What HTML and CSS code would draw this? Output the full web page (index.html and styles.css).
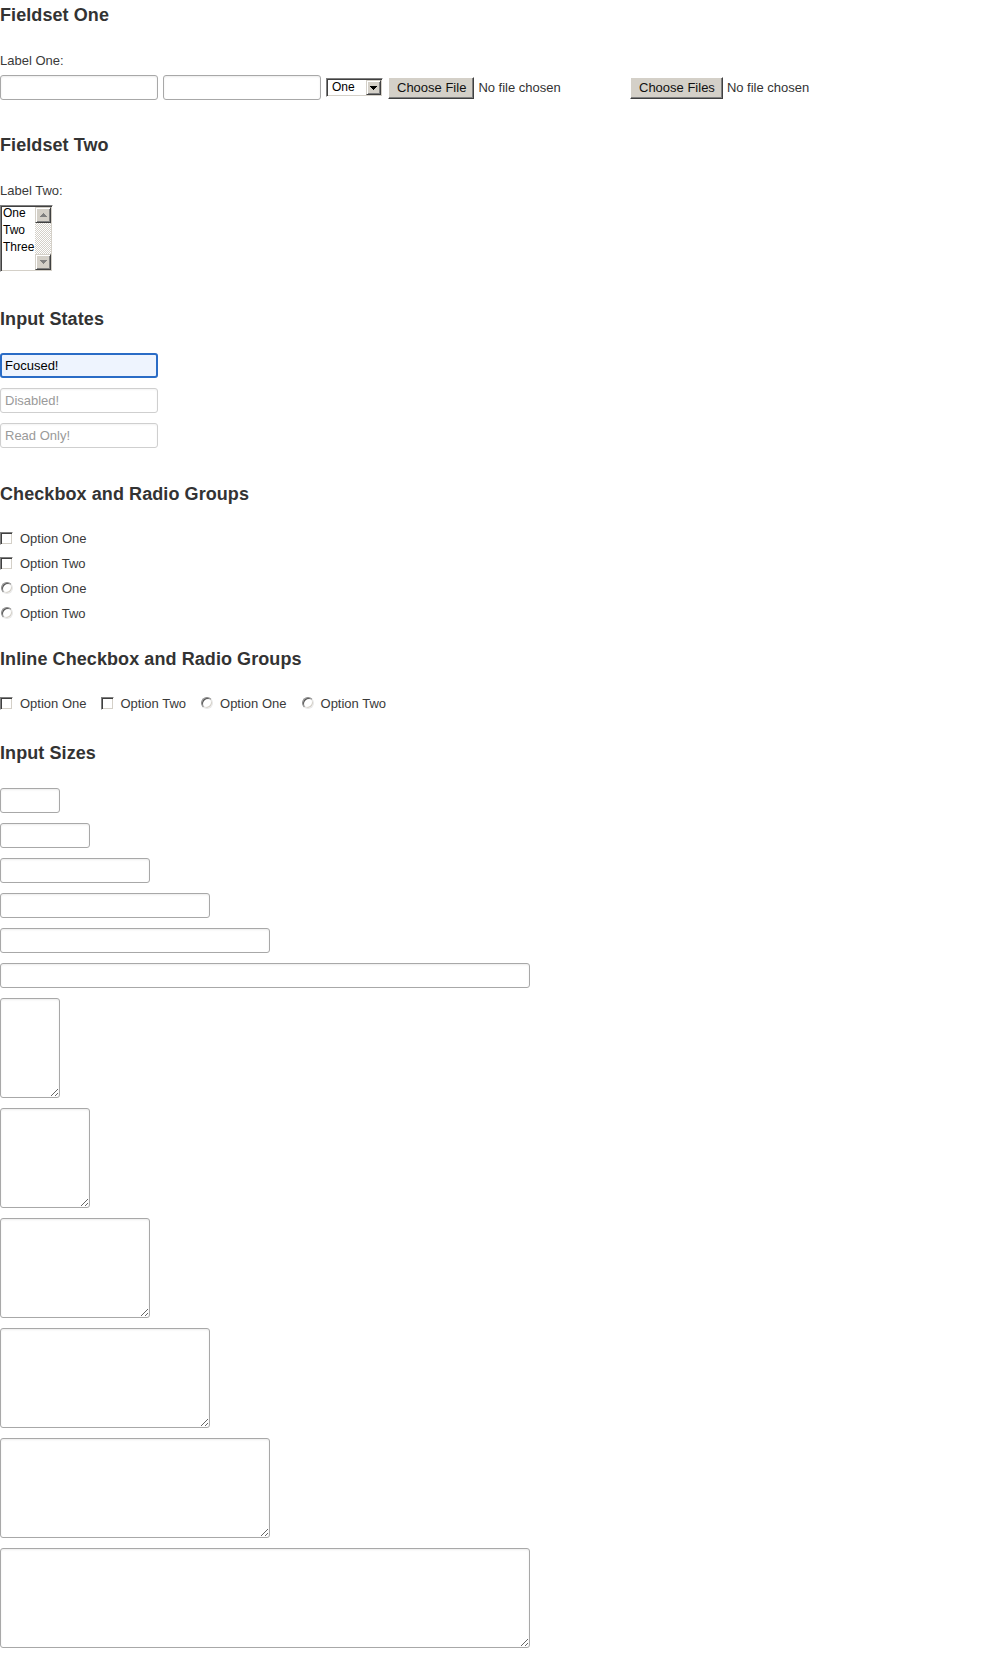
FILE: index.html
```html
<!DOCTYPE html>
<html lang="en">
<head>
<meta charset="utf-8">
<title>Form Elements</title>
<link rel="stylesheet" href="styles.css">
</head>
<body>
<form class="page">
  <section class="group">
    <h2 class="group-title">Fieldset One</h2>
    <label class="field-label" for="label-one">Label One:</label>
    <div class="field-row">
      <input id="label-one" class="text-input w-row" type="text">
      <input class="text-input w-row" type="text">
      <span class="select">
        <span class="select-value">One</span>
        <span class="select-arrow"><svg width="7" height="4" viewBox="0 0 7 4" shape-rendering="crispEdges"><rect x="0" y="0" width="7" height="1" fill="#000"/><rect x="1" y="1" width="5" height="1" fill="#000"/><rect x="2" y="2" width="3" height="1" fill="#000"/><rect x="3" y="3" width="1" height="1" fill="#000"/></svg></span>
      </span>
      <span class="file-input file-input--single"><span class="win-button">Choose File</span><span class="file-status">No file chosen</span></span>
      <span class="file-input"><span class="win-button">Choose Files</span><span class="file-status">No file chosen</span></span>
    </div>
  </section>

  <section class="group group--two">
    <h2 class="group-title">Fieldset Two</h2>
    <label class="field-label">Label Two:</label>
    <div class="listbox">
      <ul class="listbox-items">
        <li>One</li>
        <li>Two</li>
        <li>Three</li>
      </ul>
      <div class="scrollbar">
        <span class="scroll-btn"><svg width="7" height="4" viewBox="0 0 7 4" shape-rendering="crispEdges"><rect x="3" y="0" width="1" height="1" fill="#808080"/><rect x="2" y="1" width="3" height="1" fill="#808080"/><rect x="1" y="2" width="5" height="1" fill="#808080"/><rect x="0" y="3" width="7" height="1" fill="#808080"/></svg></span>
        <span class="scroll-track"></span>
        <span class="scroll-btn"><svg width="7" height="4" viewBox="0 0 7 4" shape-rendering="crispEdges"><rect x="0" y="0" width="7" height="1" fill="#808080"/><rect x="1" y="1" width="5" height="1" fill="#808080"/><rect x="2" y="2" width="3" height="1" fill="#808080"/><rect x="3" y="3" width="1" height="1" fill="#808080"/></svg></span>
      </div>
    </div>
  </section>

  <section class="group group--states">
    <h2 class="group-title">Input States</h2>
    <div class="stack">
      <input class="text-input w-row is-focused" type="text" value="Focused!">
      <input class="text-input w-row is-muted" type="text" placeholder="Disabled!" disabled>
      <input class="text-input w-row is-muted" type="text" placeholder="Read Only!" readonly>
    </div>
  </section>

  <section class="group group--checks">
    <h2 class="group-title">Checkbox and Radio Groups</h2>
    <div class="check-list">
      <label class="check"><input class="win-check" type="checkbox"><span class="check-text">Option One</span></label>
      <label class="check"><input class="win-check" type="checkbox"><span class="check-text">Option Two</span></label>
      <label class="check"><input class="win-radio" type="radio" name="r1"><span class="check-text">Option One</span></label>
      <label class="check"><input class="win-radio" type="radio" name="r1"><span class="check-text">Option Two</span></label>
    </div>
  </section>

  <section class="group group--inline">
    <h2 class="group-title">Inline Checkbox and Radio Groups</h2>
    <div class="check-inline">
      <label class="check"><input class="win-check" type="checkbox"><span class="check-text">Option One</span></label>
      <label class="check"><input class="win-check" type="checkbox"><span class="check-text">Option Two</span></label>
      <label class="check"><input class="win-radio" type="radio" name="r2"><span class="check-text">Option One</span></label>
      <label class="check"><input class="win-radio" type="radio" name="r2"><span class="check-text">Option Two</span></label>
    </div>
  </section>

  <section class="group group--sizes">
    <h2 class="group-title">Input Sizes</h2>
    <div class="stack stack--sizes">
      <input class="text-input size-mini" type="text">
      <input class="text-input size-small" type="text">
      <input class="text-input size-medium" type="text">
      <input class="text-input size-large" type="text">
      <input class="text-input size-xlarge" type="text">
      <input class="text-input size-xxlarge" type="text">
      <textarea class="text-area size-mini"></textarea>
      <textarea class="text-area size-small"></textarea>
      <textarea class="text-area size-medium"></textarea>
      <textarea class="text-area size-large"></textarea>
      <textarea class="text-area size-xlarge"></textarea>
      <textarea class="text-area size-xxlarge"></textarea>
    </div>
  </section>
</form>
</body>
</html>
```

FILE: styles.css
```css
* {
  box-sizing: border-box;
}

html,
body {
  margin: 0;
  padding: 0;
  background: #fff;
}

body {
  font-family: "Liberation Sans", Arial, sans-serif;
  font-size: 13px;
  color: #333;
}

.page {
  display: block;
  padding-top: 5px;
}

.group-title {
  margin: 0;
  font-size: 18px;
  line-height: 20px;
  font-weight: bold;
  letter-spacing: 0.08px;
  color: #333;
}

.group--two { margin-top: 35px; }
.group--states { margin-top: 37px; }
.group--checks { margin-top: 36px; }
.group--inline { margin-top: 26px; }
.group--sizes { margin-top: 30px; }

.field-label {
  display: block;
  margin-top: 28px;
  line-height: 16px;
  font-size: 13px;
  color: #3a3a3a;
}

.field-row {
  display: flex;
  align-items: center;
  gap: 5px;
  margin-top: 6px;
  height: 25px;
}

/* text inputs */
.text-input {
  display: block;
  height: 25px;
  margin: 0;
  padding: 0 4px;
  border: 1px solid #a8a8a8;
  border-radius: 3px;
  background: #fff;
  box-shadow: inset 0 1px 2px rgba(0, 0, 0, 0.08);
  font-family: "Liberation Sans", Arial, sans-serif;
  font-size: 13px;
  color: #000;
  outline: none;
}

.w-row { width: 158px; }

.is-focused {
  border: 2px solid #2a6cc6;
  background: #eef4fe;
  padding: 0 3px;
  box-shadow: none;
}

.is-muted {
  border-color: #cfcfcf;
  background: #fff;
  box-shadow: inset 0 1px 2px rgba(0, 0, 0, 0.05);
}

.text-input::placeholder {
  color: #9a9a9a;
  opacity: 1;
}

/* classic select */
.select {
  display: flex;
  align-items: stretch;
  width: 57px;
  height: 19px;
  padding: 1px;
  border: 1px solid;
  border-color: #808080 #fff #fff #808080;
  box-shadow: inset 1px 1px 0 #404040, inset -1px -1px 0 #d4d0c8;
  background: #fff;
  font-size: 12px;
  color: #000;
}

.select-value {
  flex: 1;
  padding-left: 4px;
  line-height: 15px;
}

.select-arrow {
  width: 15px;
  display: flex;
  align-items: center;
  justify-content: center;
  background: #d4d0c8;
  border: 1px solid;
  border-color: #d4d0c8 #404040 #404040 #d4d0c8;
  box-shadow: inset 1px 1px 0 #fff, inset -1px -1px 0 #808080;
}

/* file inputs */
.file-input {
  display: flex;
  align-items: center;
  gap: 4px;
  color: #333;
}

.file-input--single {
  width: 237px;
}

.win-button {
  display: inline-flex;
  align-items: center;
  height: 22px;
  padding: 0 7px 0 8px;
  background: #d4d0c8;
  border: 1px solid;
  border-color: #fff #404040 #404040 #fff;
  box-shadow: inset -1px -1px 0 #808080;
  color: #111;
  font-size: 13px;
  white-space: nowrap;
}

.file-status {
  white-space: nowrap;
}

/* listbox */
.listbox {
  display: flex;
  width: 53px;
  height: 67px;
  margin-top: 6px;
  padding: 1px;
  border: 1px solid;
  border-color: #808080 #fff #fff #808080;
  box-shadow: inset 1px 1px 0 #404040, inset -1px -1px 0 #d4d0c8;
  background: #fff;
}

.listbox-items {
  flex: 1;
  margin: 0;
  padding: 0 0 0 1px;
  list-style: none;
  font-size: 12px;
  color: #000;
}

.listbox-items li {
  height: 17px;
  line-height: 13px;
}

.scrollbar {
  width: 16px;
  display: flex;
  flex-direction: column;
}

.scroll-btn {
  height: 16px;
  display: flex;
  align-items: center;
  justify-content: center;
  background: #d4d0c8;
  border: 1px solid;
  border-color: #d4d0c8 #404040 #404040 #d4d0c8;
  box-shadow: inset 1px 1px 0 #fff, inset -1px -1px 0 #808080;
}

.scroll-track {
  flex: 1;
  background: repeating-conic-gradient(#d4d0c8 0 25%, #fff 0 50%) 0 0 / 2px 2px;
}

/* stacks */
.stack {
  display: flex;
  flex-direction: column;
  align-items: flex-start;
  gap: 10px;
  margin-top: 24px;
}

.stack--sizes {
  margin-top: 25px;
  padding-bottom: 10px;
}

/* checkboxes and radios */
.check-list {
  display: flex;
  flex-direction: column;
  gap: 5px;
  margin-top: 24px;
}

.check-inline {
  display: flex;
  gap: 14px;
  margin-top: 24px;
}

.check {
  display: flex;
  align-items: center;
  height: 20px;
  color: #3a3a3a;
  font-size: 13px;
}

.check-text {
  margin-left: 7px;
  white-space: nowrap;
}

.win-check,
.win-radio {
  appearance: none;
  -webkit-appearance: none;
  margin: 0;
  width: 13px;
  height: 13px;
  background: #fff;
  border: 1px solid;
  border-color: #808080 #fff #fff #808080;
  box-shadow: inset 1px 1px 0 #404040, inset -1px -1px 0 #d4d0c8;
  flex: none;
}

.win-radio {
  width: 12px;
  height: 12px;
  margin-left: 1px;
  border-radius: 50%;
  border-color: #8a8a8a #e8e8e8 #e8e8e8 #8a8a8a;
  box-shadow: inset 1px 1px 0 #555, inset -1px -1px 0 #d4d0c8;
}

/* sizes */
.size-mini { width: 60px; }
.size-small { width: 90px; }
.size-medium { width: 150px; }
.size-large { width: 210px; }
.size-xlarge { width: 270px; }
.size-xxlarge { width: 530px; }

.text-area {
  display: block;
  height: 100px;
  margin: 0;
  padding: 4px;
  border: 1px solid #a8a8a8;
  border-radius: 3px;
  background: #fff;
  box-shadow: inset 0 1px 2px rgba(0, 0, 0, 0.08);
  font-family: "Liberation Sans", Arial, sans-serif;
  font-size: 13px;
  resize: both;
  outline: none;
}
```
